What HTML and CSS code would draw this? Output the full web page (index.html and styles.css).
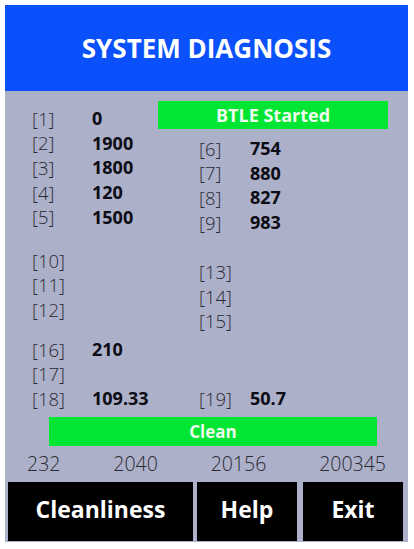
FILE: index.html
```html
<!DOCTYPE html>
<html>
<head>
<meta charset="utf-8">
<link rel="stylesheet" href="styles.css">
</head>
<body>
<div class="panel">
  <div class="header">SYSTEM DIAGNOSIS</div>
  <div class="body">
    <div class="cols">
      <div class="col left">
        <div class="group g1">
          <div class="row"><span class="lbl">[1]</span><span class="val">0</span></div>
          <div class="row"><span class="lbl">[2]</span><span class="val">1900</span></div>
          <div class="row"><span class="lbl">[3]</span><span class="val">1800</span></div>
          <div class="row"><span class="lbl">[4]</span><span class="val">120</span></div>
          <div class="row"><span class="lbl">[5]</span><span class="val">1500</span></div>
        </div>
        <div class="group g2">
          <div class="row"><span class="lbl">[10]</span><span class="val"></span></div>
          <div class="row"><span class="lbl">[11]</span><span class="val"></span></div>
          <div class="row"><span class="lbl">[12]</span><span class="val"></span></div>
        </div>
        <div class="group g3">
          <div class="row"><span class="lbl">[16]</span><span class="val">210</span></div>
          <div class="row"><span class="lbl">[17]</span><span class="val"></span></div>
          <div class="row"><span class="lbl">[18]</span><span class="val">109.33</span></div>
        </div>
      </div>
      <div class="col right">
        <div class="status">BTLE Started</div>
        <div class="group g6">
          <div class="row"><span class="lbl">[6]</span><span class="val">754</span></div>
          <div class="row"><span class="lbl">[7]</span><span class="val">880</span></div>
          <div class="row"><span class="lbl">[8]</span><span class="val">827</span></div>
          <div class="row"><span class="lbl">[9]</span><span class="val">983</span></div>
        </div>
        <div class="group g13">
          <div class="row"><span class="lbl">[13]</span><span class="val"></span></div>
          <div class="row"><span class="lbl">[14]</span><span class="val"></span></div>
          <div class="row"><span class="lbl">[15]</span><span class="val"></span></div>
        </div>
        <div class="group g19">
          <div class="row"><span class="lbl">[19]</span><span class="val">50.7</span></div>
        </div>
      </div>
    </div>
    <div class="clean">Clean</div>
    <div class="counts">
      <span>232</span><span>2040</span><span>20156</span><span>200345</span>
    </div>
    <div class="buttons">
      <div class="btn b1">Cleanliness</div>
      <div class="btn b2">Help</div>
      <div class="btn b3">Exit</div>
    </div>
  </div>
</div>
</body>
</html>
```

FILE: styles.css
```css
html, body {
  margin: 0;
  padding: 0;
  background: #ffffff;
}
body {
  font-family: "Open Sans", "Noto Sans", sans-serif;
}
.panel {
  margin: 5px 6px 0 5px;
  width: 403px;
  background: #adb0c9;
}
.header {
  height: 86px;
  background: #0a50fb;
  color: #ffffff;
  font-weight: 700;
  font-size: 26px;
  display: flex;
  align-items: center;
  justify-content: center;
}
.body {
  display: flex;
  flex-direction: column;
}
.cols {
  display: flex;
  height: 320px;
}
.col {
  display: flex;
  flex-direction: column;
}
.left {
  width: 153px;
  padding-left: 27px;
  box-sizing: border-box;
}
.right {
  width: 230px;
}
.row {
  display: flex;
  height: 24.6px;
  align-items: center;
}
.lbl {
  font-weight: 300;
  font-size: 18.5px;
  color: #2a2a32;
  width: 60px;
}
.right .lbl {
  margin-left: 41px;
  width: 51px;
}
.val {
  font-weight: 700;
  font-size: 18px;
  color: #0c0c14;
}
.g1 { margin-top: 15px; }
.g2 { margin-top: 19px; }
.g3 { margin-top: 15px; }
.status {
  margin-top: 10px;
  height: 28px;
  background: #00e632;
  color: #eefbee;
  font-weight: 700;
  font-size: 18px;
  display: flex;
  align-items: center;
  justify-content: center;
}
.g6 { margin-top: 7px; }
.g13 { margin-top: 25px; }
.g19 { margin-top: 53px; }
.clean {
  margin: 6px 0 0 44px;
  width: 328px;
  height: 29px;
  background: #00e632;
  color: #eefbee;
  font-weight: 700;
  font-size: 17px;
  display: flex;
  align-items: center;
  justify-content: center;
}
.counts {
  display: flex;
  justify-content: space-between;
  padding: 0 22px;
  height: 34px;
  padding-bottom: 2px;
  align-items: center;
  font-size: 19.5px;
  font-weight: 300;
  color: #2a2a32;
}
.buttons {
  display: flex;
  padding: 0 5px 1px 3px;
  gap: 4px;
}
.btn {
  height: 59px;
  box-sizing: border-box;
  padding-bottom: 5px;
  background: #000000;
  color: #ffffff;
  font-weight: 700;
  font-size: 23px;
  display: flex;
  align-items: center;
  justify-content: center;
}
.b1 { width: 185px; }
.b2 { width: 100px; margin-right: 2px; }
.b3 { width: 100px; }
```
